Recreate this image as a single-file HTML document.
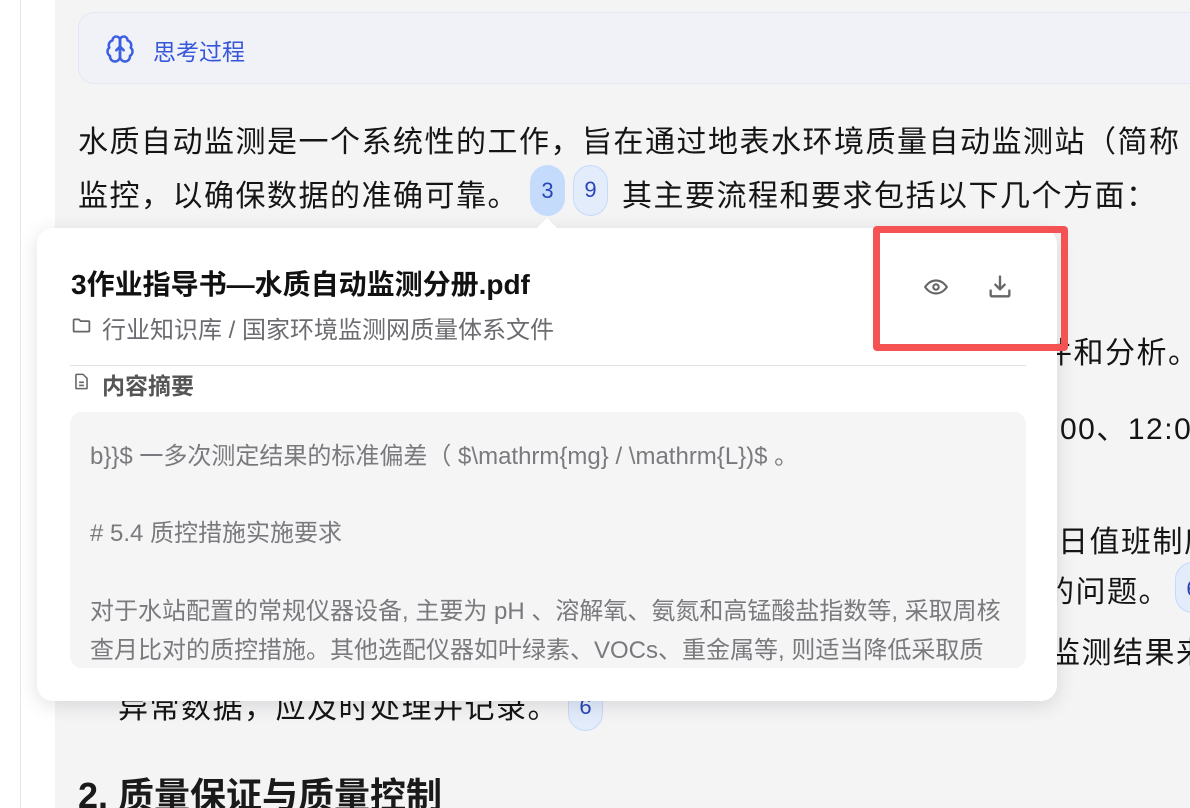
<!DOCTYPE html>
<html><head><meta charset="utf-8"><style>
*{margin:0;padding:0;box-sizing:border-box}
html,body{width:1190px;height:808px;overflow:hidden}
body{background:#fff;position:relative;font-family:"Liberation Sans","Noto Sans CJK SC",sans-serif;color:#1a1a1a}
.abs{position:absolute;white-space:nowrap}
.vline{left:20px;top:0;width:1px;height:808px;background:#e6e6e8}
.main{left:55px;top:-20px;width:1200px;height:828px;background:#f4f4f5;border-radius:24px 0 0 0}
.think{left:78px;top:12px;width:1130px;height:72px;background:#f0f2f8;border:1px solid #e3e8f4;border-radius:16px}
.body{font-size:30px;color:#151515;letter-spacing:1.5px}
.badge{position:absolute;width:35px;height:51px;border-radius:18px;font-size:22px;color:#2a45b8;text-align:center;line-height:51px}
.pop{left:37px;top:228px;width:1020px;height:473px;background:#fff;border-radius:16px;box-shadow:0 4px 20px rgba(0,0,0,.12)}
.sum{left:70px;top:412px;width:956px;height:256px;background:#f5f5f6;border-radius:12px}
.st{font-size:24px;color:#7a7a7e}
</style></head><body>
<div class="abs vline"></div>
<div class="abs main"></div>
<div class="abs think"></div>
<svg class="abs" style="left:105px;top:34px" width="30" height="30" viewBox="0 0 24 24" fill="none" stroke="#3b5fe0" stroke-width="2" stroke-linecap="round" stroke-linejoin="round"><path d="M12 5a3 3 0 1 0-5.997.125 4 4 0 0 0-2.526 5.77 4 4 0 0 0 .556 6.588A4 4 0 1 0 12 18Z"/><path d="M12 5a3 3 0 1 1 5.997.125 4 4 0 0 1 2.526 5.77 4 4 0 0 1-.556 6.588A4 4 0 1 1 12 18Z"/><path d="M12 5v13M9 13l3-3 3 3"/></svg>
<div class="abs" style="left:153px;top:33px;font-size:23px;color:#3657d8">思考过程</div>
<div class="abs body" style="left:78px;top:117px">水质自动监测是一个系统性的工作，旨在通过地表水环境质量自动监测站（简称</div>
<div class="abs body" style="left:78px;top:171px">监控，以确保数据的准确可靠。</div>
<div class="badge" style="left:530px;top:165px;background:#c5dbfb">3</div>
<div class="badge" style="left:573px;top:165px;background:#e2ecfb;border:1.5px solid #c5dafa;line-height:48px">9</div>
<div class="abs body" style="left:622px;top:171px">其主要流程和要求包括以下几个方面：</div>
<div class="abs body" style="left:1042px;top:328px">件和分析。</div>
<div class="abs body" style="left:1060px;top:404px">00、12:00</div>
<div class="abs body" style="left:1058px;top:517px">日值班制度</div>
<div class="abs body" style="left:1044px;top:567px">的问题。</div>
<div class="badge" style="left:1175px;top:562px;background:#e2ecfb;border:1.5px solid #c5dafa">6</div>
<div class="abs body" style="left:1050px;top:628px">监测结果来</div>
<div class="abs body" style="left:118px;top:683px">异常数据，应及时处理并记录。</div>
<div class="badge" style="left:568px;top:680px;background:#e2ecfb;border:1.5px solid #c5dafa">6</div>
<div class="abs" style="left:78px;top:767px;font-size:36px;font-weight:bold">2. 质量保证与质量控制</div>
<div class="abs pop"></div>
<div class="abs" style="left:536px;top:218px;width:0;height:0;border-left:11px solid transparent;border-right:11px solid transparent;border-bottom:11px solid #fff"></div>
<div class="abs" style="left:71px;top:263px;font-size:28px;font-weight:bold;color:#111">3作业指导书—水质自动监测分册.pdf</div>
<svg class="abs" style="left:71px;top:315px" width="21" height="21" viewBox="0 0 24 24" fill="none" stroke="#666" stroke-width="2" stroke-linejoin="round"><path d="M3 6a1 1 0 0 1 1-1h5l2 2h9a1 1 0 0 1 1 1v10a1 1 0 0 1-1 1H4a1 1 0 0 1-1-1Z"/></svg>
<div class="abs" style="left:102px;top:310px;font-size:24px;color:#6b6b70">行业知识库 / 国家环境监测网质量体系文件</div>
<div class="abs" style="left:70px;top:365px;width:956px;height:1px;background:#e2e2e4"></div>
<svg class="abs" style="left:72px;top:372px" width="19" height="19" viewBox="0 0 24 24" fill="none" stroke="#666" stroke-width="2" stroke-linejoin="round"><path d="M14 3H6a1 1 0 0 0-1 1v16a1 1 0 0 0 1 1h12a1 1 0 0 0 1-1V8Z"/><path d="M9 13h6M9 17h6"/></svg>
<div class="abs" style="left:102px;top:367px;font-size:23px;color:#555;font-weight:bold">内容摘要</div>
<div class="abs sum"></div>
<div class="abs st" style="left:90px;top:436px">b}}$ 一多次测定结果的标准偏差（ $\mathrm{mg} / \mathrm{L})$ 。</div>
<div class="abs st" style="left:90px;top:513px"># 5.4 质控措施实施要求</div>
<div class="abs st" style="left:90px;top:591px">对于水站配置的常规仪器设备, 主要为 pH 、溶解氧、氨氮和高锰酸盐指数等, 采取周核</div>
<div class="abs st" style="left:90px;top:630px">查月比对的质控措施。其他选配仪器如叶绿素、VOCs、重金属等, 则适当降低采取质</div>
<svg class="abs" style="left:921px;top:274px" width="30" height="26" viewBox="0 0 24 24" fill="none" stroke="#666" stroke-width="2" stroke-linecap="round" stroke-linejoin="round"><path d="M2 12s3.5-6 10-6 10 6 10 6-3.5 6-10 6S2 12 2 12Z"/><circle cx="12" cy="12" r="2.5"/></svg>
<svg class="abs" style="left:986px;top:273px" width="28" height="28" viewBox="0 0 24 24" fill="none" stroke="#666" stroke-width="2" stroke-linecap="round" stroke-linejoin="round"><path d="M12 3v11M8 10l4 4 4-4M4 15v4a1 1 0 0 0 1 1h14a1 1 0 0 0 1-1v-4"/></svg>
<div class="abs" style="left:873px;top:226px;width:195px;height:125px;border:7px solid #f55353;border-radius:4px"></div>
</body></html>
